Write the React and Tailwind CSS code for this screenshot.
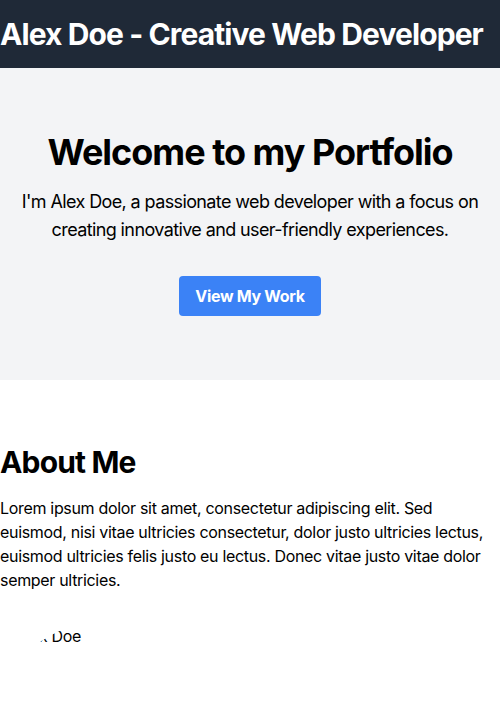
export default function App() {
  return (
    <div className="min-h-screen bg-white text-black font-['Inter',sans-serif]">
      <header className="bg-[#1f2937] text-white py-4">
        <h1 className="text-3xl font-bold tracking-[-0.03em]">Alex Doe - Creative Web Developer</h1>
      </header>

      <section className="bg-[#f3f4f6] py-16 text-center">
        <h2 className="text-4xl font-bold mb-4 tracking-[-0.028em]">Welcome to my Portfolio</h2>
        <p className="text-lg mb-8 tracking-[-0.034em]">
          I'm Alex Doe, a passionate web developer with a focus on creating innovative and
          user-friendly experiences.
        </p>
        <button className="bg-[#3b82f6] text-white font-bold px-4 py-2 rounded tracking-[-0.02em]">
          View My Work
        </button>
      </section>

      <section className="py-16">
        <h2 className="text-3xl font-bold mb-4 tracking-[-0.028em]">About Me</h2>
        <p className="tracking-[-0.02em]">
          Lorem ipsum dolor sit amet, consectetur adipiscing elit. Sed euismod, nisi vitae
          ultricies consectetur, dolor justo ultricies lectus, euismod ultricies felis justo eu
          lectus. Donec vitae justo vitae dolor semper ultricies.
        </p>
        {/* broken profile picture: only the alt text shows through the round clip */}
        <div className="mt-8 w-48 h-48 rounded-full overflow-hidden">
          <div className="flex items-start tracking-[-0.02em]">
            <span className="w-4 h-4 shrink-0" />
            <span>Alex Doe</span>
          </div>
        </div>
      </section>
    </div>
  );
}
